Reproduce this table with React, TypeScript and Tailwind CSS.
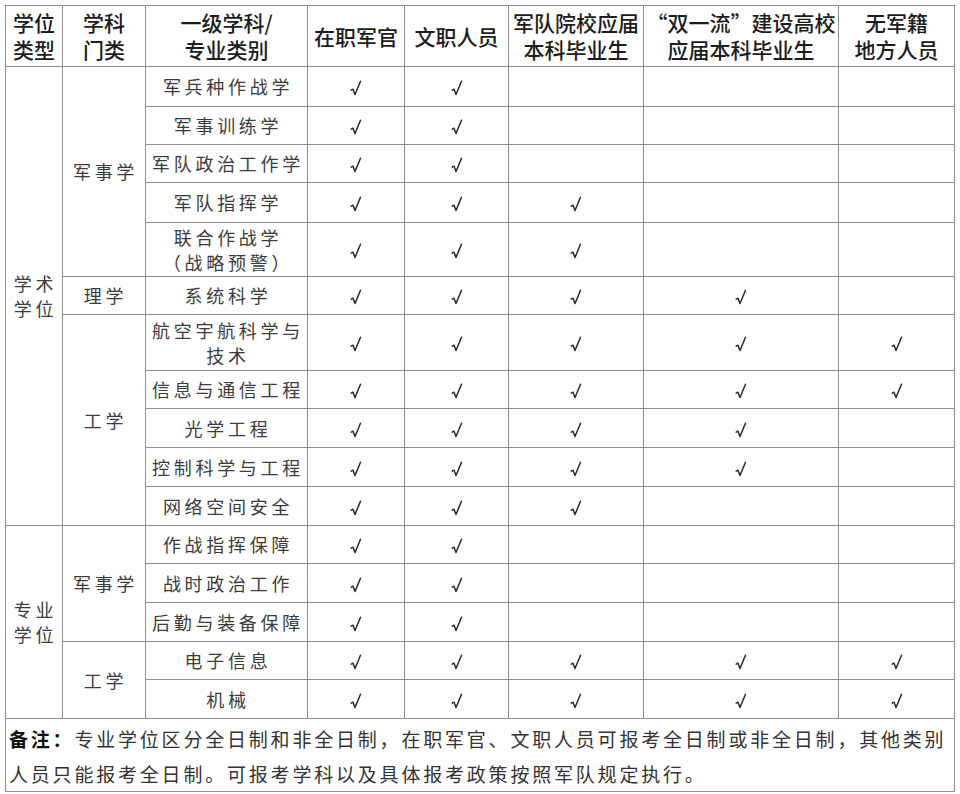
import React from "react";

type Row = { name: React.ReactNode; h: number; c: boolean[] };

const Y = true;
const N = false;

const rows: Row[] = [
  { name: "军兵种作战学", h: 40, c: [Y, Y, N, N, N] },
  { name: "军事训练学", h: 38, c: [Y, Y, N, N, N] },
  { name: "军队政治工作学", h: 38, c: [Y, Y, N, N, N] },
  { name: "军队指挥学", h: 40, c: [Y, Y, Y, N, N] },
  { name: <>联合作战学<br />（战略预警）</>, h: 54, c: [Y, Y, Y, N, N] },
  { name: "系统科学", h: 38, c: [Y, Y, Y, Y, N] },
  { name: <>航空宇航科学与<br />技术</>, h: 56, c: [Y, Y, Y, Y, Y] },
  { name: "信息与通信工程", h: 38, c: [Y, Y, Y, Y, Y] },
  { name: "光学工程", h: 39, c: [Y, Y, Y, Y, N] },
  { name: "控制科学与工程", h: 39, c: [Y, Y, Y, Y, N] },
  { name: "网络空间安全", h: 39, c: [Y, Y, Y, N, N] },
  { name: "作战指挥保障", h: 38, c: [Y, Y, N, N, N] },
  { name: "战时政治工作", h: 39, c: [Y, Y, N, N, N] },
  { name: "后勤与装备保障", h: 39, c: [Y, Y, N, N, N] },
  { name: "电子信息", h: 38, c: [Y, Y, Y, Y, Y] },
  { name: "机械", h: 39, c: [Y, Y, Y, Y, Y] },
];

const cell = "border border-[#8e8e8e] text-center align-middle p-0";
const body = "text-[18px] leading-[25px] tracking-[3.7px] text-[#3c3c3c]";

function Check() {
  return (
    <svg width="12" height="18" viewBox="0 0 12 18" className="inline-block align-middle">
      <path d="M1.2 10.2 L3 9.2 L5 14.5 L10.5 1.2" fill="none" stroke="#2a2a2a" strokeWidth="1.5" strokeLinejoin="round" strokeLinecap="round" />
    </svg>
  );
}

export default function App() {
  return (
    <div
      className="w-[960px] h-[794px] bg-white pt-[5px] pl-[5px]"
      style={{ fontFamily: '"Noto Sans CJK SC", "Noto Sans", sans-serif' }}
    >
      <table className="table-fixed border-collapse w-[949px]">
        <colgroup>
          <col className="w-[57px]" />
          <col className="w-[83px]" />
          <col className="w-[162px]" />
          <col className="w-[97px]" />
          <col className="w-[104px]" />
          <col className="w-[135px]" />
          <col className="w-[195px]" />
          <col className="w-[116px]" />
        </colgroup>
        <thead>
          <tr className="h-[61px] text-[21px] leading-[27px] text-[#1c1c1c]">
            <th className={`${cell} font-medium`}>学位<br />类型</th>
            <th className={`${cell} font-medium`}>学科<br />门类</th>
            <th className={`${cell} font-medium`}>一级学科/<br />专业类别</th>
            <th className={`${cell} font-medium`}>在职军官</th>
            <th className={`${cell} font-medium`}>文职人员</th>
            <th className={`${cell} font-medium whitespace-nowrap`}>军队院校应届<br />本科毕业生</th>
            <th className={`${cell} font-medium whitespace-nowrap`}>“双一流”建设高校<br />应届本科毕业生</th>
            <th className={`${cell} font-medium`}>无军籍<br />地方人员</th>
          </tr>
        </thead>
        <tbody>
          {rows.map((r, i) => (
            <tr key={i} style={{ height: r.h }}>
              {i === 0 && (
                <td rowSpan={11} className={`${cell} ${body} pl-[3px]`}>学术<br />学位</td>
              )}
              {i === 11 && (
                <td rowSpan={5} className={`${cell} ${body} pl-[3px]`}>专业<br />学位</td>
              )}
              {i === 0 && (
                <td rowSpan={5} className={`${cell} ${body} pl-[3px]`}>军事学</td>
              )}
              {i === 5 && <td className={`${cell} ${body} pl-[3px]`}>理学</td>}
              {i === 6 && (
                <td rowSpan={5} className={`${cell} ${body} pl-[3px]`}>工学</td>
              )}
              {i === 11 && (
                <td rowSpan={3} className={`${cell} ${body} pl-[3px]`}>军事学</td>
              )}
              {i === 14 && (
                <td rowSpan={2} className={`${cell} ${body} pl-[3px]`}>工学</td>
              )}
              <td className={`${cell} ${body} pl-[3px] whitespace-nowrap`}>{r.name}</td>
              {r.c.map((v, j) => (
                <td key={j} className={`${cell}`}>
                  {v ? <Check /> : null}
                </td>
              ))}
            </tr>
          ))}
          <tr className="h-[71px]">
            <td
              colSpan={8}
              className="border border-[#8e8e8e] p-0 pl-[3px] text-left align-top pt-[2px] text-[19px] leading-[35px] tracking-[2.8px] text-[#333]"
            >
              <div className="whitespace-nowrap">
                <span className="font-bold text-[#111]">备注：</span>专业学位区分全日制和非全日制，在职军官、文职人员可报考全日制或非全日制，其他类别
              </div>
              <div className="whitespace-nowrap">
                人员只能报考全日制。可报考学科以及具体报考政策按照军队规定执行。
              </div>
            </td>
          </tr>
        </tbody>
      </table>
    </div>
  );
}
